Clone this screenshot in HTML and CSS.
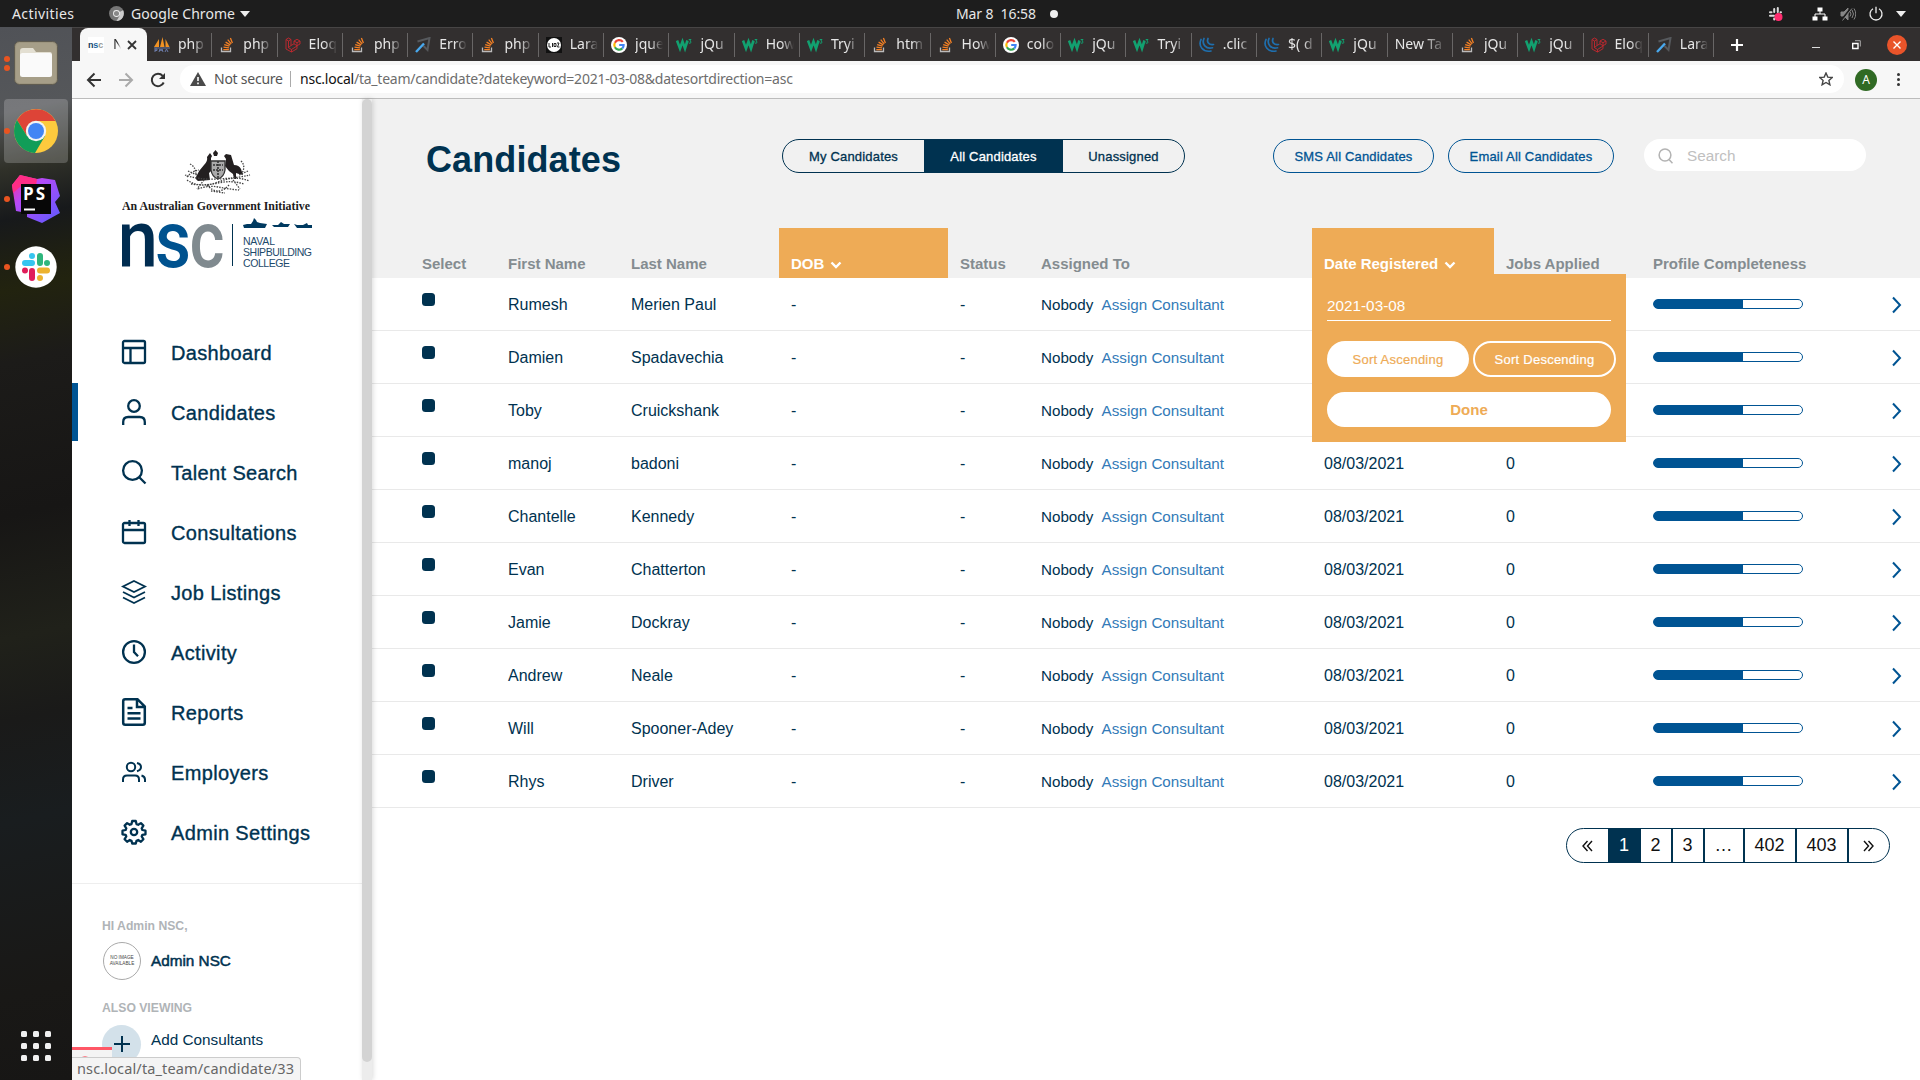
FILE: index.html
```html
<!DOCTYPE html>
<html lang="en">
<head>
<meta charset="utf-8">
<title>Candidates - NSC</title>
<link rel="stylesheet" href="styles.css">
</head>
<body>
<svg class="sprite" aria-hidden="true">
  <symbol id="so" viewBox="0 0 16 16"><path d="M2.5 10.5v4h9v-4" fill="none" stroke="#bcbbbb" stroke-width="1.3"/><path d="M4.3 12.6h5.6M4.5 10.2l5.500.6M5.2 7.700l5.300 1.500M6.600 5.100l4.700 2.800M8.700 2.700l3.500 4.200M11.400 1l2 5" stroke="#f48024" stroke-width="1.3"/></symbol>
  <symbol id="w3" viewBox="0 0 16 16"><path d="M1 3.500l3 8 2.500-7 2.500 7 2.500-8" fill="none" stroke="#12a170" stroke-width="2.600"/><path d="M12.700 2.500h2.300l-1.200 1.500q1.500.3 1.200 1.500-.8 1.400-2.300.4" fill="none" stroke="#12a170" stroke-width="1"/></symbol>
  <symbol id="laravel" viewBox="0 0 16 16"><path d="M1 2.500l2.500-1.500L6 2.500v6l3-1.700V4l3-1.700L15 4v3l-3 1.700v3L6.500 15 1 12zM1 2.500L3.500 4v6.700L6.500 12.500 12 9M3.500 4L6 2.500M9 4l3 1.700L15 4M12 5.700v3M9 6.800l3 1.900M6 8.500l-2.500 2M6.500 12.500V15" fill="none" stroke="#c5282f" stroke-width=".9"/></symbol>
  <symbol id="google" viewBox="0 0 16 16"><circle cx="8" cy="8" r="8" fill="#fff"/><g fill="none" stroke-width="2.200"><path d="M11.800 4.900A4.700 4.700 0 0 0 3.900 5.700" stroke="#ea4335"/><path d="M3.900 5.700a4.700 4.700 0 0 0 0 4.600" stroke="#fbbc05"/><path d="M3.900 10.300a4.700 4.700 0 0 0 7.400 1.100" stroke="#34a853"/><path d="M11.300 11.400A4.700 4.700 0 0 0 12.600 8H8.200" stroke="#4285f4"/></g></symbol>
  <symbol id="jquery" viewBox="0 0 16 16"><g fill="none" stroke="#1f6fae" stroke-width="1.700" stroke-linecap="round"><path d="M2 2.500C-1 9 4 15.500 12 14"/><path d="M5 1.500C2.500 7 7 12.500 13.500 10.800"/><path d="M9 1.500C7.500 5 10 8.300 14.500 7.500"/></g></symbol>
  <symbol id="flare" viewBox="0 0 16 16"><path d="M2.500 4.500L14.500 1 12.500 13 8.500 9" fill="none" stroke="#56595d" stroke-width="2"/><path d="M1 15L9 6.500" stroke="#49a9ee" stroke-width="2.400"/></symbol>
  <symbol id="chev" viewBox="0 0 10 18"><path d="M1 1.500l7 7.500-7 7.500" fill="none" stroke="#005493" stroke-width="2"/></symbol>
  <symbol id="down" viewBox="0 0 12 8"><path d="M1.500 1.500L6 6l4.500-4.500" fill="none" stroke="#fff" stroke-width="2.400"/></symbol>
</svg>

<header class="topbar">
  <span class="tb-act">Activities</span>
  <svg class="tb-chrome" viewBox="0 0 16 16"><circle cx="8" cy="8" r="8" fill="#777"/><path d="M8 8L15 4.500A8 8 0 0 1 8 16l3.500-6z" fill="#ccc"/><circle cx="8" cy="8" r="3.700" fill="#eee"/><circle cx="8" cy="8" r="2.700" fill="#888"/></svg>
  <span class="tb-app">Google Chrome</span>
  <i class="caret"></i>
  <span class="tb-date">Mar 8&nbsp; 16:58</span>
  <i class="tb-dot"></i>
  <div class="tray">
    <svg width="16" height="16" viewBox="0 0 16 16"><g stroke="#ddd" stroke-width="2" stroke-linecap="round"><path d="M6.200 3v3M2 6.200h1.500M9.800 2v4M13 6.200h-.5M2 9.800h4M6.200 13.500v-1M9.800 10v3M12 9.800h1"/></g><circle cx="10.500" cy="11" r="4" fill="#ff2d6f"/></svg>
    <svg width="16" height="16" viewBox="0 0 16 16" fill="#fff"><path d="M5.500 1.500h5v4h-5zM.5 10.500h5v4h-5zM10.500 10.500h5v4h-5z"/><path d="M8 5v3M3 11V8h10v3" fill="none" stroke="#fff"/></svg>
    <svg width="16" height="16" viewBox="0 0 16 16" fill="none" stroke="#858585"><path d="M1 6h3l4-4v12L4 10H1z" fill="#858585"/><path d="M10 5.500q2 2.500 0 5M12 4q3 4 0 8M14 2.500q3.500 5.500 0 11"/><path d="M1.500 14L11 2" stroke="#1d1d1d" stroke-width="2"/><path d="M2.500 14.500L12 2.500"/></svg>
    <svg width="16" height="16" viewBox="0 0 16 16" fill="none" stroke="#eee" stroke-width="1.300"><path d="M5 2.800a6 6 0 1 0 6 0M8 .8v6.500"/></svg>
    <i class="caret"></i>
  </div>
</header>

<div class="desktop">
  <aside class="dock">
    <div class="app"><span class="pips"><i></i><i></i></span>
      <svg width="44" height="44" viewBox="0 0 44 44"><rect x=".5" y=".5" width="43" height="43" rx="5" fill="#9d957f" stroke="#5f5b50"/><rect x="2" y="2" width="40" height="40" rx="4" fill="#a69e88"/><path d="M6 10q0-3 3-3h10l3 4h14q2 0 2 3v16H6z" fill="#e3dfd2"/><rect x="6" y="12" width="32" height="24" rx="2.500" fill="#fafafa"/></svg></div>
    <div class="app on"><span class="pips"><i></i></span>
      <svg width="46" height="46" viewBox="-23 -23 46 46"><circle r="22" fill="#fdca3e"/><path d="M-19-11A22 22 0 0 1 19.500-10H0L-9 5z" fill="#dd4437"/><path d="M-19-11A22 22 0 0 0-1 22L9 5-9 5z" fill="#109d58"/><circle r="10.200" fill="#f3f3f3"/><circle r="8" fill="#4285f4"/></svg></div>
    <div class="app"><span class="pips"><i></i></span>
      <svg width="48" height="48" viewBox="0 0 48 48"><defs><linearGradient id="psg" x1="0" y1="0" x2="1" y2="1"><stop offset="0" stop-color="#ff2d90"/><stop offset=".35" stop-color="#b74af7"/><stop offset="1" stop-color="#5b5bff"/></linearGradient></defs><path d="M8 0l17 4 5-1 13 2 5 16-5 6 5 11-18 10-15-6v-4l-11-2L0 10z" fill="url(#psg)"/><path d="M8 0l17 4-1 7H9L1 18 0 10z" fill="#ff2d86"/><path fill="#070707" d="M9 9h30v30H9z"/><path fill="#fff" d="M12 33.500h11v2H12z"/><text x="11" y="25" class="ps" textLength="22">PS</text></svg></div>
    <div class="app"><span class="pips"><i></i></span>
      <svg width="42" height="42" viewBox="-21 -21 42 42"><circle r="20.700" fill="#fff"/><g stroke-width="6" stroke-linecap="round"><path d="M-11-4h7M-4-11v0" stroke="#36c5f0"/><path d="M4-11v7M11-4v0" stroke="#2eb67d"/><path d="M11 3.500H4M4 11v0" stroke="#ecb22e"/><path d="M-4 11V4M-11 3.500v0" stroke="#e01e5a"/></g></svg></div>
    <div class="grid9"><i></i><i></i><i></i><i></i><i></i><i></i><i></i><i></i><i></i></div>
  </aside>

  <div class="browser">
    <nav class="tabs">
      <div class="tab active"><span class="nscfav">n<b>s</b><em>c</em></span><span class="t">N</span><svg width="10" height="10" viewBox="0 0 10 10"><path d="M1 1l8 8M9 1L1 9" stroke="#333" stroke-width="1.800"/></svg></div>
      <div class="tab"><svg viewBox="0 0 16 16"><path d="M0 10L5 2v8zM6 10L8.500 0l2 10zM11.500 10l0-8 4 8z" fill="#f09224"/><path d="M0 11h16M1 15v-3h2v1.500H1M5 15l1-3 1 2 1-2 1 3M11 15l1.500-3 1.500 3" fill="none" stroke="#6b7aa8"/></svg><span class="t">php</span></div>
      <div class="tab"><svg><use href="#so"/></svg><span class="t">php</span></div>
      <div class="tab"><svg><use href="#laravel"/></svg><span class="t">Eloq</span></div>
      <div class="tab"><svg><use href="#so"/></svg><span class="t">php</span></div>
      <div class="tab"><svg><use href="#flare"/></svg><span class="t">Erro</span></div>
      <div class="tab"><svg><use href="#so"/></svg><span class="t">php</span></div>
      <div class="tab"><svg viewBox="0 0 16 16"><path fill="#111" d="M0 0h16v16H0z"/><circle cx="8" cy="8" r="7" fill="#fff"/><path d="M3 6v4h2M6.500 6v4M8 6.500h2v3H8zM11 6h2l-1.500 4h2" fill="none" stroke="#222"/></svg><span class="t">Lara</span></div>
      <div class="tab"><svg><use href="#google"/></svg><span class="t">jque</span></div>
      <div class="tab"><svg><use href="#w3"/></svg><span class="t">jQu</span></div>
      <div class="tab"><svg><use href="#w3"/></svg><span class="t">How</span></div>
      <div class="tab"><svg><use href="#w3"/></svg><span class="t">Tryi</span></div>
      <div class="tab"><svg><use href="#so"/></svg><span class="t">htm</span></div>
      <div class="tab"><svg><use href="#so"/></svg><span class="t">How</span></div>
      <div class="tab"><svg><use href="#google"/></svg><span class="t">colo</span></div>
      <div class="tab"><svg><use href="#w3"/></svg><span class="t">jQu</span></div>
      <div class="tab"><svg><use href="#w3"/></svg><span class="t">Tryi</span></div>
      <div class="tab"><svg><use href="#jquery"/></svg><span class="t">.clic</span></div>
      <div class="tab"><svg><use href="#jquery"/></svg><span class="t">$( d</span></div>
      <div class="tab"><svg><use href="#w3"/></svg><span class="t">jQu</span></div>
      <div class="tab"><span class="t">New Ta</span></div>
      <div class="tab"><svg><use href="#so"/></svg><span class="t">jQu</span></div>
      <div class="tab"><svg><use href="#w3"/></svg><span class="t">jQu</span></div>
      <div class="tab"><svg><use href="#laravel"/></svg><span class="t">Eloq</span></div>
      <div class="tab"><svg><use href="#flare"/></svg><span class="t">Lara</span></div>
      <svg class="plus" width="14" height="14" viewBox="0 0 14 14"><path d="M7 1v12M1 7h12" stroke="#fff" stroke-width="2.200"/></svg>
      <div class="winbtns"><i class="min"></i><svg width="9" height="10" viewBox="0 0 9 10" fill="none" stroke="#fff"><path d="M.7 3.500h5.300v5H.7z" stroke-width="1.400"/><path d="M3 .7h5.300v5.800" stroke="#aaa"/></svg><span class="close"><svg width="8" height="8" viewBox="0 0 8 8"><path d="M.5.5l7 7M7.500.5l-7 7" stroke="#fff" stroke-width="1.400"/></svg></span></div>
    </nav>
    <div class="toolbar">
      <svg class="nav1" width="16" height="16" viewBox="0 0 16 16" fill="none" stroke="#333" stroke-width="2"><path d="M15 8H2M8.500 1.500L2 8l6.500 6.500"/></svg>
      <svg class="nav2" width="16" height="16" viewBox="0 0 16 16" fill="none" stroke="#aaa" stroke-width="2"><path d="M1 8h13M7.500 1.500L14 8l-6.500 6.500"/></svg>
      <svg class="nav3" width="16" height="16" viewBox="0 0 16 16" fill="none" stroke="#333" stroke-width="2"><path d="M13.700 10.500a6.200 6.200 0 1 1-1-6.600"/><path d="M15 1v6H9z" fill="#333" stroke="none"/></svg>
      <div class="omni">
        <svg width="16" height="14" viewBox="0 0 16 14"><path d="M8 0l8 14H0z" fill="#4a4a4a"/><path d="M8 5v4M8 10.500v1.700" stroke="#fff" stroke-width="1.600"/></svg>
        <span class="ns">Not secure</span><i class="vs"></i><span class="url"><b>nsc.local</b>/ta_team/candidate?datekeyword=2021-03-08&amp;datesortdirection=asc</span>
        <svg class="star" width="14" height="14" viewBox="0 0 14 14"><path d="M7 1l1.800 4.100 4.400.4-3.300 2.900 1 4.400L7 10.500l-3.900 2.300 1-4.400L.8 5.500l4.400-.4z" fill="none" stroke="#444" stroke-width="1.400"/></svg>
      </div>
      <span class="ava">A</span><span class="kebab"><i></i><i></i><i></i></span>
    </div>

    <div class="page">
      <aside class="side">
        <div class="brand">
          <svg width="192" height="122" viewBox="0 0 192 122">
            <g fill="#231f20"><path d="M91 4l2.500-3 2.500 3-1 3h-3z"/><path d="M74 28q3-7 8-12 4-4 3-8l3-4 2 3-1 2v7l1 5-3 3 1 7-12 1q-3-2-2-4z"/><path d="M104 5l5 1 3 10q5 0 7 4l2 6-4-1-3-1v6h-2l-1-5-4-3-4-5 1-7-2-3z"/></g>
            <path d="M89 12h14v9q-1 7-7 9-6-2-7-9z" fill="#aaa" stroke="#333" stroke-width="1.300"/><path d="M91 16h10M91 21h10M96 12v17" stroke="#333" stroke-width="1.600" stroke-dasharray="2 1"/>
            <g fill="none" stroke="#444" stroke-width="1.300" stroke-dasharray="1.500 1.200"><path d="M65 28q5-6 12-7M68 15q6 3 6 11M63 26q14 5 33 4t32-4M65 31q13 9 31 2t31-1M66 22l9 4M126 22l-9 4M119 12q5 5 1 12M69 35q13 2 27-1t26 1M76 40q10-4 20-2t21 3M85 36q11 12 22 0M89 42l14 2M82 31l-7 9M111 31l7 9"/></g>
            <text x="0" y="60.500" class="gov" textLength="188" lengthAdjust="spacingAndGlyphs">An Australian Government Initiative</text>
            <g class="nsc"><text x="-5" y="117.500" fill="#002c50" textLength="41" lengthAdjust="spacingAndGlyphs">n</text><text x="33" y="117.500" fill="#00528f" textLength="36" lengthAdjust="spacingAndGlyphs">s</text><text x="67.500" y="117.500" fill="#808a8f" textLength="35" lengthAdjust="spacingAndGlyphs">c</text></g>
            <path d="M110.500 75v42" stroke="#003250"/>
            <path d="M121 76l4-1h4l2-3 1-3 2 2 1 2 3 1 7 1-2 4h-21zM150 76h6l3-3 3 2h6l-2 3h-14zM172 75l3 1h6l4-2 1 2h4v3h-15z" fill="#003a60"/>
            <g class="nc"><text x="121" y="95.700" textLength="32">NAVAL</text><text x="121" y="106.700" textLength="69">SHIPBUILDING</text><text x="121" y="117.700" textLength="47">COLLEGE</text></g>
          </svg>
        </div>
        <ul class="menu">
          <li><svg viewBox="0 0 24 24"><rect x="1" y="1" width="22" height="22" rx="1.500"/><path d="M1 8h22M8.500 8v15"/></svg><span>Dashboard</span></li>
          <li class="cur"><svg viewBox="0 0 24 26" class="tall"><circle cx="12" cy="7" r="5.800"/><path d="M1.200 26v-3q0-5 5-5h11.600q5 0 5 5v3"/></svg><span>Candidates</span></li>
          <li><svg viewBox="0 0 24 24"><circle cx="10.500" cy="10.500" r="9.400"/><path d="M17.500 17.500l6 6"/></svg><span>Talent Search</span></li>
          <li><svg viewBox="0 0 24 24"><rect x="1" y="3" width="22" height="20" rx="1.500"/><path d="M1 10h22M7.500 0v6M16.500 0v6"/></svg><span>Consultations</span></li>
          <li><svg viewBox="0 0 24 24" class="thin"><path d="M12 1l11 5.500L12 12 1 6.500zM1 12l11 5.500L23 12M1 17.500L12 23l11-5.500"/></svg><span>Job Listings</span></li>
          <li><svg viewBox="0 0 24 24"><circle cx="12" cy="12" r="10.900"/><path d="M12 4.500V12l4 4.200"/></svg><span>Activity</span></li>
          <li><svg viewBox="0 0 24 28" class="rep"><path d="M1.200 3.200q0-2 2-2H15.500L22.800 8.500v16.300q0 2-2 2H3.200q-2 0-2-2zM15 1.200V9h7.800M5.500 10h5M5.500 15.200h13M5.500 20.500h13"/></svg><span>Reports</span></li>
          <li><svg viewBox="0 0 24 20" class="emp"><circle cx="9" cy="5" r="4.200"/><path d="M1 20v-2.500q0-4 4-4h8q4 0 4 4V20M15 1q4 1 4 4t-4 4.200M19.500 13.500q3.500 1 3.500 4V20"/></svg><span>Employers</span></li>
          <li><svg viewBox="0 0 24 24"><circle cx="12" cy="12" r="3.200"/><path d="M10.200 1h3.600l.7 3.100 1.700.7 2.700-1.700 2.500 2.500-1.700 2.700.7 1.700 3.100.7v3.600l-3.100.5-.7 1.700 1.700 2.700-2.500 2.500-2.700-1.700-1.700.7-.7 2.800h-3.600l-.7-2.800-1.700-.7-2.700 1.700-2.500-2.500 1.700-2.700-.7-1.700L.5 14.300v-3.600l3.100-.7.7-1.700-1.700-2.700 2.500-2.500 2.700 1.700 1.700-.7z" stroke-linejoin="round"/></svg><span>Admin Settings</span></li>
        </ul>
        <div class="acct">
          <p class="lbl l1">HI Admin NSC,</p>
          <div class="who"><span class="noimg">NO IMAGE<br>AVAILABLE</span><b>Admin NSC</b></div>
          <p class="lbl l2">ALSO VIEWING</p>
          <div class="who add"><span class="circ"><svg width="16" height="16" viewBox="0 0 16 16"><path d="M8 0v16M0 8h16" stroke="#003250" stroke-width="2"/></svg></span><span class="ac">Add Consultants</span></div>
        </div>
        <div class="debug"><svg width="24" height="10" viewBox="0 0 24 10"><path d="M2 8q0-6 5-6t5 6M16 6q2-2 3-1v4" fill="none" stroke="#ff5766" stroke-width="1.300"/></svg></div>
      </aside>
      <div class="scroll"><i></i></div>
      <div class="status">nsc.local/ta_team/candidate/33</div>

      <main>
        <div class="head">
          <h1>Candidates</h1>
          <div class="seg"><span class="s1">My Candidates</span><span class="s2">All Candidates</span><span class="s3">Unassigned</span></div>
          <span class="pill sms">SMS All Candidates</span><span class="pill em">Email All Candidates</span>
          <div class="search"><svg width="16" height="16" viewBox="0 0 16 16" fill="none" stroke="#b3b3b3" stroke-width="1.500"><circle cx="7" cy="7" r="5.900"/><path d="M11 11.500l3.500 3.700"/></svg><span>Search</span></div>
        </div>
        <div class="row th"><span>Select</span><span>First Name</span><span>Last Name</span><span class="hot dob">DOB<svg><use href="#down"/></svg></span><span>Status</span><span>Assigned To</span>
          <span class="hot dr">Date Registered<svg><use href="#down"/></svg>
            <div class="drop"><div class="inp">2021-03-08</div><div class="sorts"><span class="asc">Sort Ascending</span><span class="desc">Sort Descending</span></div><div class="done">Done</div></div>
          </span><span>Jobs Applied</span><span>Profile Completeness</span></div>
        <div class="row"><span><i class="cb"></i></span><span>Rumesh</span><span>Merien Paul</span><span>-</span><span>-</span><span class="as">Nobody <a>Assign Consultant</a></span><span></span><span></span><span class="pf"><i class="bar"></i><svg><use href="#chev"/></svg></span></div>
        <div class="row"><span><i class="cb"></i></span><span>Damien</span><span>Spadavechia</span><span>-</span><span>-</span><span class="as">Nobody <a>Assign Consultant</a></span><span></span><span></span><span class="pf"><i class="bar"></i><svg><use href="#chev"/></svg></span></div>
        <div class="row"><span><i class="cb"></i></span><span>Toby</span><span>Cruickshank</span><span>-</span><span>-</span><span class="as">Nobody <a>Assign Consultant</a></span><span></span><span></span><span class="pf"><i class="bar"></i><svg><use href="#chev"/></svg></span></div>
        <div class="row"><span><i class="cb"></i></span><span>manoj</span><span>badoni</span><span>-</span><span>-</span><span class="as">Nobody <a>Assign Consultant</a></span><span>08/03/2021</span><span>0</span><span class="pf"><i class="bar"></i><svg><use href="#chev"/></svg></span></div>
        <div class="row"><span><i class="cb"></i></span><span>Chantelle</span><span>Kennedy</span><span>-</span><span>-</span><span class="as">Nobody <a>Assign Consultant</a></span><span>08/03/2021</span><span>0</span><span class="pf"><i class="bar"></i><svg><use href="#chev"/></svg></span></div>
        <div class="row"><span><i class="cb"></i></span><span>Evan</span><span>Chatterton</span><span>-</span><span>-</span><span class="as">Nobody <a>Assign Consultant</a></span><span>08/03/2021</span><span>0</span><span class="pf"><i class="bar"></i><svg><use href="#chev"/></svg></span></div>
        <div class="row"><span><i class="cb"></i></span><span>Jamie</span><span>Dockray</span><span>-</span><span>-</span><span class="as">Nobody <a>Assign Consultant</a></span><span>08/03/2021</span><span>0</span><span class="pf"><i class="bar"></i><svg><use href="#chev"/></svg></span></div>
        <div class="row"><span><i class="cb"></i></span><span>Andrew</span><span>Neale</span><span>-</span><span>-</span><span class="as">Nobody <a>Assign Consultant</a></span><span>08/03/2021</span><span>0</span><span class="pf"><i class="bar"></i><svg><use href="#chev"/></svg></span></div>
        <div class="row"><span><i class="cb"></i></span><span>Will</span><span>Spooner-Adey</span><span>-</span><span>-</span><span class="as">Nobody <a>Assign Consultant</a></span><span>08/03/2021</span><span>0</span><span class="pf"><i class="bar"></i><svg><use href="#chev"/></svg></span></div>
        <div class="row"><span><i class="cb"></i></span><span>Rhys</span><span>Driver</span><span>-</span><span>-</span><span class="as">Nobody <a>Assign Consultant</a></span><span>08/03/2021</span><span>0</span><span class="pf"><i class="bar"></i><svg><use href="#chev"/></svg></span></div>
        <div class="pager">
          <span class="p-end"><svg width="11" height="12" viewBox="0 0 11 12"><path d="M5.500 1L1 6l4.500 5M10 1L5.500 6l4.500 5"/></svg></span><span class="p-on">1</span><span class="p-s">2</span><span class="p-s">3</span><span class="p-m">…</span><span class="p-l">402</span><span class="p-l">403</span><span class="p-end"><svg width="11" height="12" viewBox="0 0 11 12"><path d="M1 1l4.500 5L1 11M5.500 1L10 6l-4.500 5"/></svg></span>
        </div>
      </main>
    </div>
  </div>
</div>
</body>
</html>
```
FILE: styles.css
```css
* { box-sizing: border-box; }
html, body { margin: 0; height: 100%; overflow: hidden; }
body { width: 1920px; height: 1080px; font-family: "Liberation Sans", Arial, sans-serif; color: #003250; background: #fff; display: flex; flex-direction: column; }
svg { display: block; flex: none; }
i, em { font-style: normal; }
.sprite { display: none; }

/* system bar */
.topbar { height: 27px; flex: none; background: #1d1d1d; color: #e8e8e8; display: flex; align-items: center; padding-left: 12px; font: 14px/26px "Noto Sans", sans-serif; white-space: nowrap; }
.tb-act { width: 97px; letter-spacing: .4px; }
.tb-chrome { width: 15px; height: 15px; margin-right: 7px; }
.tb-app { width: 109px; letter-spacing: .05px; }
.caret { border: 5px solid transparent; border-top: 6px solid #eee; border-bottom: 0; }
.tb-date { margin-left: 706px; width: 94px; letter-spacing: -.1px; }
.tb-dot { width: 8px; height: 8px; border-radius: 50%; background: #eee; }
.tray { display: flex; align-items: center; margin-left: 710px; }
.tray svg { margin-right: 12px; }
.tray svg:first-child { margin-right: 28px; }

.desktop { display: flex; height: 1053px; }

/* launcher */
.dock { width: 72px; flex: none; display: flex; flex-direction: column; padding: 4px 4px 19px; background: linear-gradient(168deg, #505257 0, #55575a 85px, #303129 140px, #17191b 190px, #1f2012 235px, #22230f 260px, #1c1b19 330px, #171615 480px, #20211a 600px, #1a1a19 680px, #191d1f 780px, #191816 950px, #171615 100%); }
.app { width: 64px; height: 64px; margin-bottom: 4px; border-radius: 4px; display: flex; align-items: center; justify-content: center; position: relative; }
.app.on { background: rgba(255,255,255,.2); }
.pips { position: absolute; left: 0; top: 0; height: 64px; display: flex; flex-direction: column; justify-content: center; gap: 3px; }
.pips i { width: 6px; height: 6px; border-radius: 50%; background: #e95420; }
.ps { font: 700 17px "Open Sans", sans-serif; fill: #fff; }
.grid9 { margin: auto auto 0 17px; display: grid; grid-template-columns: repeat(3, 6px); gap: 6px; }
.grid9 i { width: 6px; height: 6px; border-radius: 1.500px; background: #f0f0f0; }

/* browser chrome */
.browser { width: 1848px; display: flex; flex-direction: column; }
.tabs { height: 34px; flex: none; background: #322f2f; border-top: 1px solid #474545; display: flex; align-items: center; padding-left: 8px; }
.tab { width: 65.300px; height: 24px; flex: none; display: flex; align-items: center; border-right: 1px solid #686666; padding-left: 7px; color: #e6e6e6; font: 14px/22px "Noto Sans", sans-serif; }
.tab > svg { width: 16px; height: 16px; margin-right: 8px; }
.tab .t { flex: 1; margin-right: 5px; margin-top: -2px; overflow: hidden; white-space: nowrap; -webkit-mask-image: linear-gradient(90deg, #000 55%, transparent); mask-image: linear-gradient(90deg, #000 55%, transparent); }
.tab.active { width: 67px; height: 34px; background: #f7f7f7; border: 0; border-radius: 8px 8px 0 0; color: #333; padding-left: 8px; }
.tab.active .t { flex: none; width: 8px; margin: -2px 6px 0 9px; }
.tab.active svg { width: 10px; height: 10px; margin: 0; }
.nscfav { width: 16px; height: 16px; background: #fff; font: 700 9px/16px "Liberation Sans", sans-serif; color: #14405f; letter-spacing: -.2px; }
.nscfav b { color: #1c66a0; } .nscfav em { color: #999; }
.plus { margin-left: 16px; }
.winbtns { margin-left: auto; display: flex; align-items: center; padding-right: 13px; }
.min { width: 8px; height: 1px; background: #ddd; margin: 6px 32px 0 0; }
.close { width: 20px; height: 20px; border-radius: 50%; background: #e9542a; margin-left: 26px; display: grid; place-items: center; }
.toolbar { height: 38px; flex: none; background: #f7f7f7; border-bottom: 1px solid #bcbcbc; display: flex; align-items: center; }
.nav1 { margin-left: 14px; } .nav2 { margin-left: 16px; } .nav3 { margin-left: 16px; }
.omni { margin-left: 14px; width: 1664px; height: 28px; border-radius: 14px; background: #fff; display: flex; align-items: center; padding-left: 10px; font: 14px/28px "Noto Sans", sans-serif; color: #6d6d6d; white-space: nowrap; margin-top: -1px; }
.ns { margin-left: 8px; width: 76px; color: #555; letter-spacing: -.25px; }
.vs { width: 1px; height: 16px; background: #aaa; margin-right: 9px; }
.url { letter-spacing: -.24px; }
.url b { font-weight: 400; color: #111; }
.star { margin-left: auto; margin-right: 11px; }
.ava { width: 22px; height: 22px; border-radius: 50%; background: #306a24; color: #fff; font: 12px/22px "Noto Sans", sans-serif; text-align: center; margin-left: 11px; }
.kebab { display: flex; flex-direction: column; gap: 2px; margin-left: 20px; }
.kebab i { width: 3px; height: 3px; border-radius: 50%; background: #333; }

.page { flex: 1; display: flex; position: relative; min-height: 0; }

/* sidebar */
.side { width: 290px; flex: none; background: #fff; position: relative; overflow: hidden; }
.brand { padding: 50px 0 0 50px; height: 224px; }
.gov { font: 700 12.500px "Liberation Serif", serif; fill: #1c1c1c; }
.nsc text { font: 500 79px Roboto, sans-serif; }
.nc text { font: 10.500px "Liberation Sans", sans-serif; fill: #1d4a6b; }
.menu { list-style: none; margin: 0; padding: 0; }
.menu li { height: 60px; display: flex; align-items: center; padding: 0 0 2px 50px; font-size: 20px; letter-spacing: .35px; -webkit-text-stroke: .35px; }
.menu li span { padding-top: 2px; }
.menu svg { width: 24px; height: 24px; margin-right: 25px; fill: none; stroke: #003250; stroke-width: 2.300; overflow: visible; }
.menu svg.tall { height: 26px; } .menu svg.rep { height: 28px; stroke-width: 2.500; } .menu svg.emp { height: 20px; stroke-width: 2; } .menu svg.thin { stroke-width: 1.800; }
.menu li.cur { background: linear-gradient(#005493, #005493) 0 0/6px 58px no-repeat; }
.acct { border-top: 1px solid #eee; margin-top: 20px; padding: 34px 0 0 30px; }
.lbl { margin: 0; font: 700 12.200px/16px "Liberation Sans", sans-serif; color: #b0b4b7; }
.who { display: flex; align-items: center; gap: 11px; font-size: 15.300px; }
.who b { font-weight: 400; -webkit-text-stroke: .5px; }
.l1 + .who { margin-top: 7px; height: 40px; padding-left: 1px; gap: 10px; }
.noimg { width: 38px; height: 38px; border: 1px solid #aaa; border-radius: 50%; font: 4.700px/6px "Liberation Sans", sans-serif; text-align: center; padding-top: 12px; color: #444; }
.l2 { margin-top: 19px; }
.add { margin-top: 8px; height: 40px; gap: 10px; }
.ac { margin-top: -8px; }
.circ { width: 39px; height: 39px; border-radius: 50%; background: #d3e1ea; display: grid; place-items: center; }
.debug { position: absolute; left: 0; bottom: 0; width: 40px; height: 33px; border-top: 3px solid #ff5766; background: #f4f4f4; padding: 5px 0 0 6px; }
.scroll { width: 10px; flex: none; background: #ececec; z-index: 1; box-shadow: 1px 0 5px rgba(0,0,0,.15); }
.scroll i { display: block; height: 963px; border-radius: 5px; background: #d3d3d3; }
.status { position: absolute; left: 0; bottom: 0; z-index: 3; width: 229px; height: 23px; background: #f4f4f4; border: 1px solid #ccc; border-width: 1px 1px 0 0; border-radius: 0 4px 0 0; font: 14.500px/20px "Noto Sans", sans-serif; letter-spacing: .14px; color: #666; padding-left: 5px; white-space: nowrap; }

/* main */
main { width: 1548px; background: #fff; }
.head { height: 129px; background: #f1f1f1; display: flex; align-items: flex-start; padding: 40px 0 0 54px; }
h1 { margin: 0; width: 356px; font: 700 36px/42px "Liberation Sans", sans-serif; letter-spacing: .1px; }
.seg, .pill { height: 34px; border: 1px solid #003250; border-radius: 17px; display: flex; overflow: hidden; font-size: 13px; line-height: 34px; text-align: center; white-space: nowrap; letter-spacing: .18px; -webkit-text-stroke: .3px; }
.seg { width: 403px; }
.s1 { width: 141px; } .s2 { width: 139px; background: #003250; color: #fff; } .s3 { flex: 1; }
.pill { color: #005493; border-color: #005493; justify-content: center; }
.sms { width: 161px; margin-left: 88px; } .em { width: 166px; margin-left: 14px; }
.search { width: 222px; height: 32px; margin-left: 30px; border-radius: 16px; background: #fff; display: flex; align-items: center; padding: 1px 0 0 14px; gap: 13px; color: #c0c0c0; font-size: 15.300px; }
.row { display: grid; grid-template-columns: 124px 123px 160px 169px 81px 283px 182px 147px 279px; height: 53px; border-bottom: 1px solid #e9e9e9; font-size: 16px; line-height: 54px; white-space: nowrap; }
.row > span { padding-left: 12px; height: 52px; }
.row > span:first-child { padding-left: 50px; }
.cb { display: block; width: 13px; height: 13px; margin-top: 15px; border-radius: 3.500px; background: #003250; }
.row .as { font-size: 15.200px; line-height: 53px; }
.as a { color: #337ab7; margin-left: 4px; }
.pf { display: flex; align-items: center; }
.bar { width: 150px; height: 10px; border: 1px solid #005493; border-radius: 5px; background: linear-gradient(90deg, #005493 60%, #fff 60%); }
.pf svg { width: 10px; height: 18px; margin: 1px 0 0 89px; }
.th { height: 50px; border: 0; background: #f1f1f1; font-size: 15px; font-weight: 700; color: #848c90; line-height: 20px; }
.row.th > span { padding-top: 26px; height: 50px; }
.th .hot { background: #eeab56; color: #fff; position: relative; }
.hot svg { display: inline-block; width: 12px; height: 8px; margin-left: 6px; }
.drop { position: absolute; z-index: 2; left: 0; top: 46px; width: 314px; height: 168px; background: #eeab56; padding: 19px 15px 0; font-weight: 400; }
.inp { height: 28px; border-bottom: 1px solid #fff; font-size: 15.300px; line-height: 25px; }
.sorts { display: flex; gap: 4px; margin: 20px -5px 15px 0; font-size: 13px; line-height: 37px; letter-spacing: .25px; text-align: center; -webkit-text-stroke: .2px; }
.asc { width: 142px; height: 36px; border-radius: 18px; background: #fff; color: #eeab56; }
.desc { width: 143px; height: 36px; border-radius: 18px; border: 2px solid #fff; line-height: 33px; }
.done { height: 35px; border-radius: 18px; background: #fff; color: #eeab56; font-weight: 700; text-align: center; line-height: 36px; }
.pager { margin: 20px 30px 0 auto; width: 324px; height: 35px; border: 1px solid #003250; border-radius: 18px; display: flex; overflow: hidden; font-size: 18px; line-height: 33px; text-align: center; color: #111; }
.pager svg { fill: none; stroke: #111; stroke-width: 1.400; margin: 11px auto 0; }
.p-end { flex: 1; } .p-on { width: 33px; background: #003250; color: #fff; }
.p-s, .p-m, .p-l { border-right: 2px solid #003250; }
.p-s { width: 32px; } .p-m { width: 40px; } .p-l { width: 52px; }
```
